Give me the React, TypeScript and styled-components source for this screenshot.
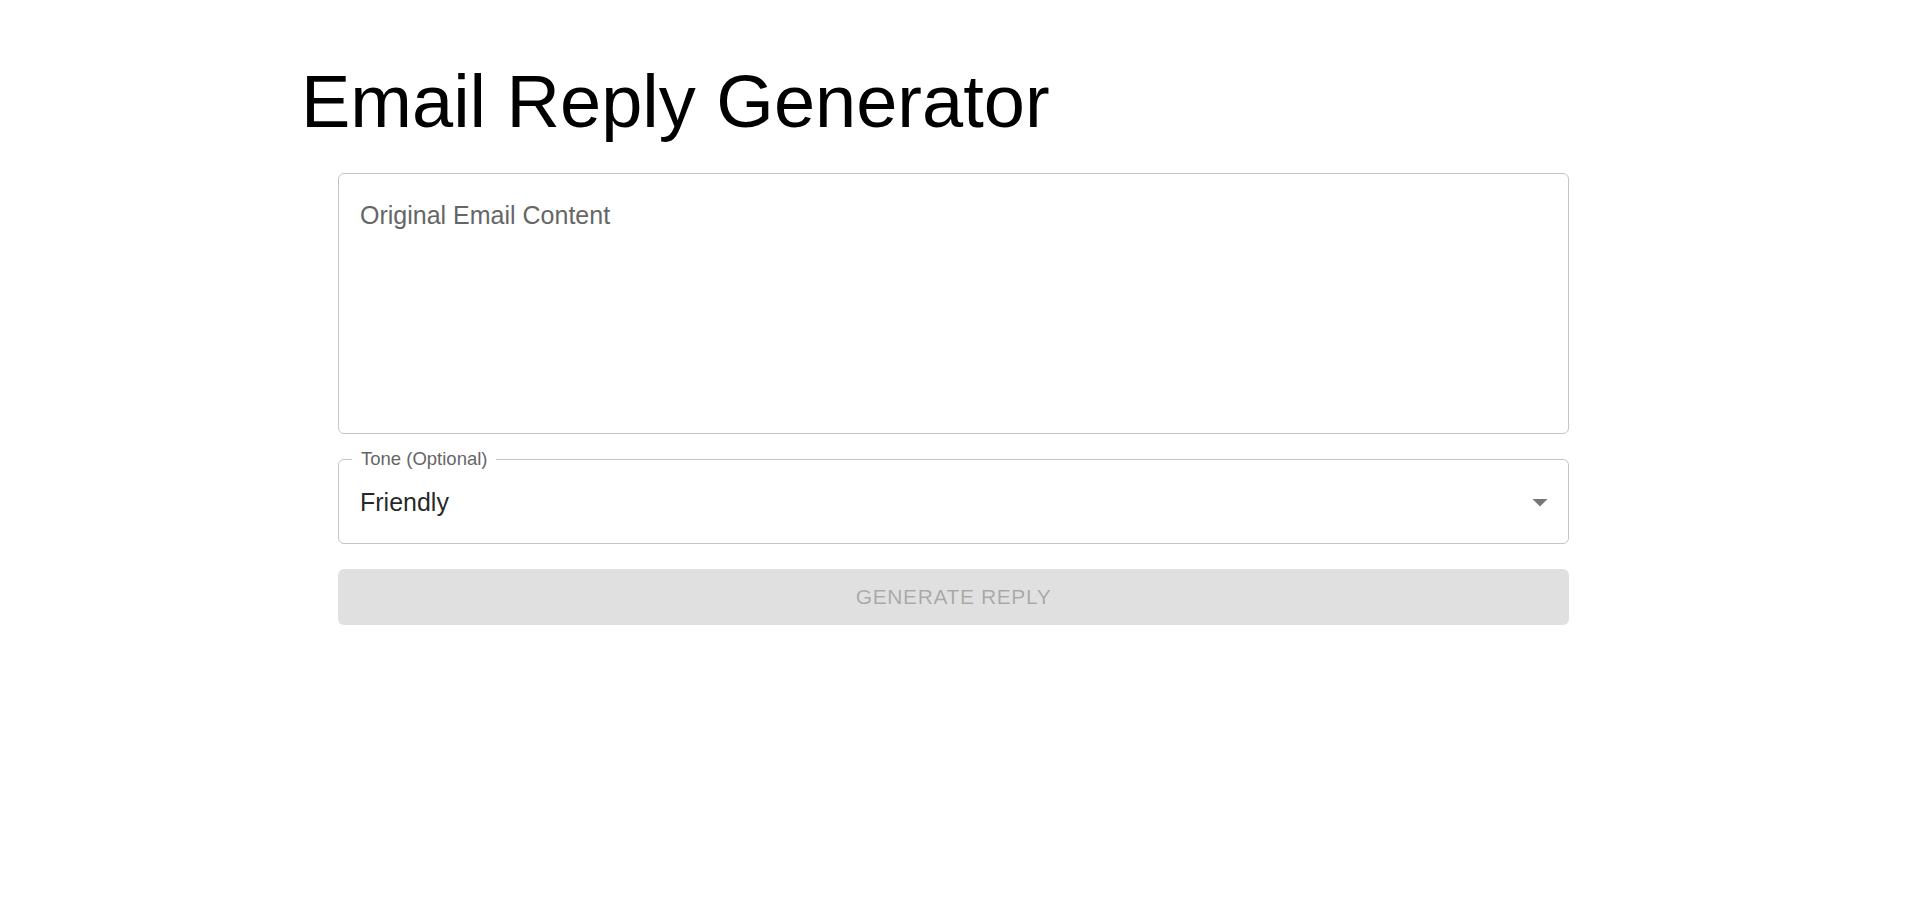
import React from "react";
import styled, { createGlobalStyle } from "styled-components";

const GlobalStyle = createGlobalStyle`
  html, body {
    margin: 0;
    padding: 0;
    background: #ffffff;
    font-family: "Liberation Sans", Arial, Helvetica, sans-serif;
  }
  * { box-sizing: border-box; }
`;

const Page = styled.main`
  padding: 60px 0 0 301px;
  min-height: 907px;
`;

const Title = styled.h1`
  margin: 0;
  font-size: 74px;
  line-height: 84px;
  font-weight: 400;
  color: #000000;
`;

const Form = styled.form`
  margin: 29px 0 0 37px;
  width: 1231px;
  display: flex;
  flex-direction: column;
  gap: 25px;
`;

const TextArea = styled.textarea`
  display: block;
  width: 100%;
  height: 261px;
  margin: 0;
  padding: 24px 21px;
  border: 1px solid #c4c4c4;
  border-radius: 6px;
  resize: none;
  font-family: inherit;
  font-size: 25px;
  line-height: 34.5px;
  color: rgba(0, 0, 0, 0.87);
  outline: none;
  &::placeholder {
    color: #666666;
    opacity: 1;
  }
`;

const SelectField = styled.div`
  position: relative;
  height: 85px;
  border: 1px solid #c4c4c4;
  border-radius: 6px;
  display: flex;
  align-items: center;
  padding: 0 10px 0 21px;
`;

const FloatLabel = styled.span`
  position: absolute;
  top: -12px;
  left: 13px;
  padding: 0 9px 0 9px;
  background: #ffffff;
  font-size: 18.5px;
  line-height: 22px;
  color: #666666;
`;

const SelectValue = styled.span`
  flex: 1;
  font-size: 25px;
  line-height: 34px;
  color: rgba(0, 0, 0, 0.87);
`;

const Arrow = styled.svg`
  width: 36px;
  height: 36px;
  fill: rgba(0, 0, 0, 0.54);
`;

const Button = styled.button`
  height: 56px;
  width: 100%;
  border: none;
  border-radius: 6px;
  background: rgba(0, 0, 0, 0.12);
  color: rgba(0, 0, 0, 0.26);
  font-family: inherit;
  font-size: 21px;
  font-weight: 500;
  letter-spacing: 0.6px;
  text-transform: uppercase;
  cursor: default;
`;

export default function App() {
  return (
    <>
      <GlobalStyle />
      <Page>
        <Title>Email Reply Generator</Title>
        <Form onSubmit={(e) => e.preventDefault()}>
          <TextArea placeholder="Original Email Content" />
          <SelectField role="button" aria-haspopup="listbox">
            <FloatLabel>Tone (Optional)</FloatLabel>
            <SelectValue>Friendly</SelectValue>
            <Arrow viewBox="0 0 24 24" aria-hidden="true">
              <path d="M7 10l5 5 5-5z" />
            </Arrow>
          </SelectField>
          <Button type="submit" disabled>
            Generate Reply
          </Button>
        </Form>
      </Page>
    </>
  );
}
